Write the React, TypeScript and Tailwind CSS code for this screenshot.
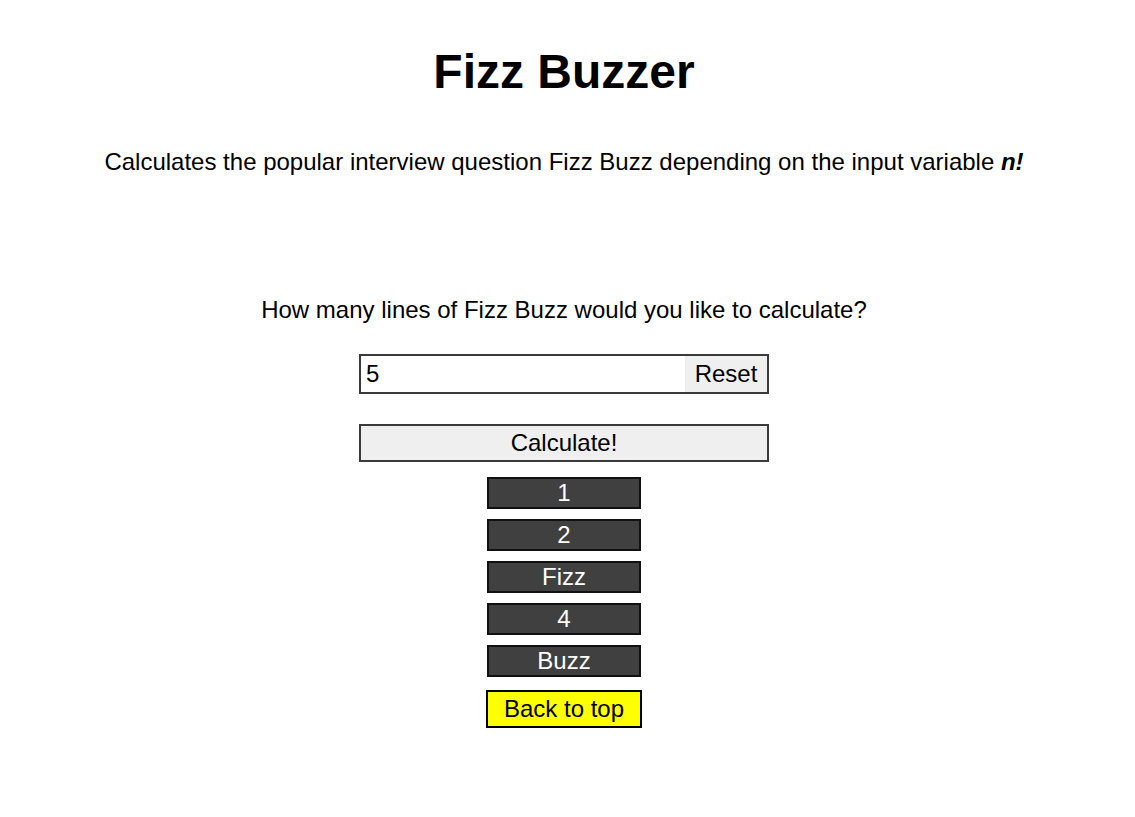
import { useState } from "react"

function fizz(i: number) {
  if (i % 15 === 0) return "FizzBuzz"
  if (i % 3 === 0) return "Fizz"
  if (i % 5 === 0) return "Buzz"
  return String(i)
}

export default function App() {
  const [n, setN] = useState("5")
  const [lines, setLines] = useState<string[]>(["1", "2", "Fizz", "4", "Buzz"])

  const calculate = () => {
    const count = parseInt(n, 10) || 0
    setLines(Array.from({ length: count }, (_, i) => fizz(i + 1)))
  }

  return (
    <div className="min-h-[817px] pr-[7px] bg-white text-black font-['Liberation_Sans',Arial,sans-serif] flex flex-col items-center">
      <h1 className="mt-[42px] text-[48px] font-bold leading-[60px]">Fizz Buzzer</h1>
      <p className="mt-[46px] text-[24px] leading-[28px]">
        Calculates the popular interview question Fizz Buzz depending on the input variable{" "}
        <b><i>n!</i></b>
      </p>

      <p className="mt-[120px] text-[24px] leading-[28px]">
        How many lines of Fizz Buzz would you like to calculate?
      </p>

      <div className="mt-[30px] flex w-[410px] h-[40px] border-2 border-[#3a3a3a] bg-white">
        <input
          value={n}
          onChange={(e) => setN(e.target.value)}
          className="flex-1 min-w-0 pl-[5px] text-[24px] outline-none bg-transparent"
        />
        <button
          onClick={() => { setN(""); setLines([]) }}
          className="w-[82px] bg-[#efefef] text-[24px] text-center"
        >
          Reset
        </button>
      </div>

      <button
        onClick={calculate}
        className="mt-[30px] w-[410px] h-[38px] border-2 border-[#3a3a3a] bg-[#efefef] text-[24px] leading-none"
      >
        Calculate!
      </button>

      <div className="mt-[15px] flex flex-col gap-[10px]">
        {lines.map((line, i) => (
          <div
            key={i}
            className="w-[154px] h-[32px] border-2 border-[#111] bg-[#404040] text-white text-[24px] leading-[28px] text-center"
          >
            {line}
          </div>
        ))}
      </div>

      <button
        onClick={() => window.scrollTo(0, 0)}
        className="mt-[13px] w-[156px] h-[38px] border-2 border-black bg-[#ffff00] text-[24px] leading-none"
      >
        Back to top
      </button>
    </div>
  )
}
